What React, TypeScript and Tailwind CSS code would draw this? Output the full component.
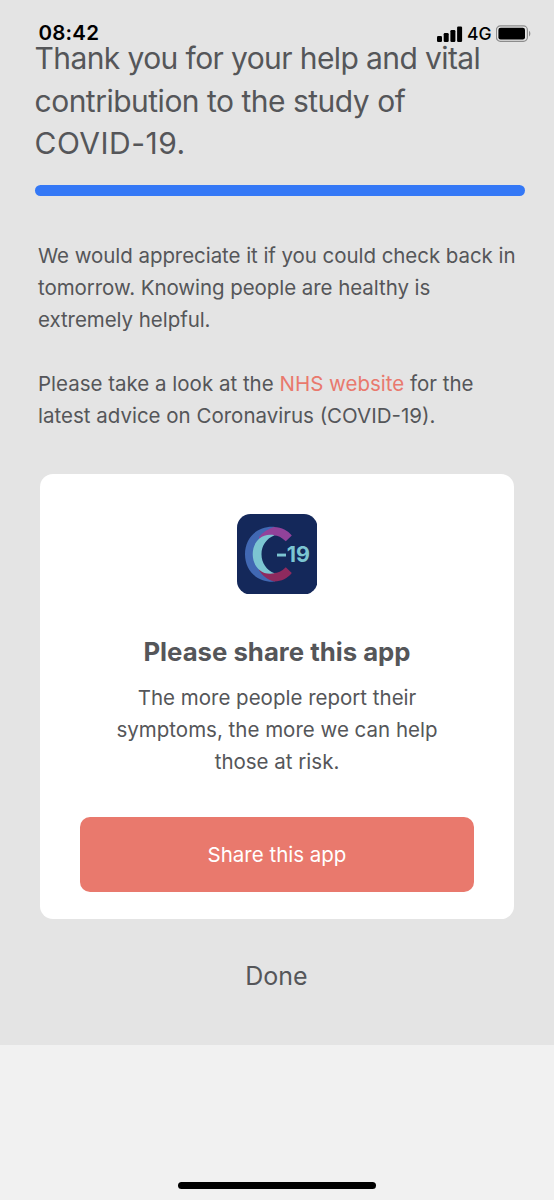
import type { ReactNode } from "react";

const HEADING = [
  { text: "Thank you for your help and vital", spacing: "tracking-[-0.6px]" },
  { text: "contribution to the study of", spacing: "tracking-[-0.5px]" },
  { text: "COVID-19.", spacing: "tracking-[0.5px]" },
];

function StatusBar() {
  return (
    <div className="absolute inset-x-0 top-0 flex h-[67px] items-center justify-between pr-[22px] pl-[38.5px] text-black">
      <span className="text-[20.5px] leading-none font-semibold tracking-[0.2px]">08:42</span>
      <div className="flex items-center">
        <svg className="h-4 w-[26px]" viewBox="0 0 26 16">
          <rect x="0" y="10" width="5" height="6" rx="1.2" />
          <rect x="6.7" y="7" width="5" height="9" rx="1.2" />
          <rect x="13.4" y="4" width="5" height="12" rx="1.2" />
          <rect x="20.1" y="0.5" width="5" height="15.5" rx="1.2" />
        </svg>
        <span className="ml-1 w-[29px] text-[17.5px] leading-none font-medium whitespace-nowrap">4G</span>
        <svg className="h-[17px] w-9" viewBox="0 0 36 17">
          <rect x="0.4" y="0.9" width="31" height="15.4" rx="4" fill="none" stroke="#8c8c8c" strokeWidth="1.2" />
          <rect x="2.4" y="2.8" width="26.6" height="11.6" rx="2.2" />
          <path d="M33 5.8c1.8 .9 1.8 4.7 0 5.6z" fill="#8c8c8c" />
        </svg>
      </div>
    </div>
  );
}

function AppIcon() {
  return (
    <svg className="h-[80.5px] w-[80.5px] shrink-0" viewBox="0 0 80.5 80.5">
      <rect width="80.5" height="80.5" rx="13.5" fill="#14285a" />
      {/* outer blue crescent */}
      <path d="M38 12.9C20 11.5 8 24 8 40.2S20 69 38 67.6L34 60C20 56 20 24 34 21z" fill="#4168b3" />
      {/* upper and lower arms */}
      <path d="M22 23C25.5 18 31 15 37 12.9C45 13 50.7 16.4 54.8 21.5L48.8 27.2C43 21.5 38 20.5 33 22L22 28z" fill="#92429a" />
      <path d="M22 52L33 58.5C38 60 43 59 48.8 53.2L54.8 59C50.5 64.5 44.5 67.3 37.5 67.5C30 65.5 25 61.5 22 56z" fill="#8e2a5e" />
      {/* inner crescent */}
      <path d="M37.5 21.2C23 18.5 15.7 29.5 15.7 40.2S23 62 37.5 59.3C29.5 56 24.5 49 24.5 40.2S29.5 24.5 37.5 21.2z" fill="#7cc5d2" />
      <rect x="40" y="39.6" width="9" height="2.9" fill="#7cc5d2" />
      <text y="48" fill="#7cc5d2" fontSize="21.5" fontWeight="700">
        <tspan x="49.8">1</tspan>
        <tspan x="59">9</tspan>
      </text>
    </svg>
  );
}

function Copy({ children }: { children: ReactNode }) {
  return <p className="text-[20.5px] leading-[32.1px] whitespace-nowrap">{children}</p>;
}

export default function App() {
  return (
    <div className="relative h-[1200px] w-[554px] overflow-hidden bg-[#f1f1f1] font-['Inter',sans-serif] text-[#555659]">
      <StatusBar />
      <main className="flex h-[1045px] flex-col bg-[#e4e4e4] pt-[37px]">
        <h1 className="pl-[34.5px] text-[30px] leading-[42.7px] font-normal whitespace-nowrap">
          {HEADING.map((line) => (
            <span key={line.text} className={`block ${line.spacing}`}>
              {line.text}
            </span>
          ))}
        </h1>
        <div className="mt-[19.5px] ml-[35px] h-[11px] w-[490px] shrink-0 rounded-full bg-[#3478f6]" />

        <div className="mt-[44px] flex flex-col gap-[32px] pl-[38px]">
          <div className="tracking-[-0.06px]">
            <Copy>
              We would appreciate it if you could check back in
              <br />
              tomorrow. Knowing people are healthy is
              <br />
              extremely helpful.
            </Copy>
          </div>
          <Copy>
            Please take a look at the <a className="text-[#e9796d]">NHS website</a> for the
            <br />
            latest advice on Coronavirus (COVID-19).
          </Copy>
        </div>

        <section className="mx-[40px] mt-[41.5px] flex h-[445px] shrink-0 flex-col items-center rounded-[13px] bg-white px-[40px] pt-[40px]">
          <AppIcon />
          <h2 className="mt-[41.5px] text-[25.75px] leading-[32px] font-bold whitespace-nowrap">Please share this app</h2>
          <div className="mt-[14px] text-center">
            <Copy>
              The more people report their
              <br />
              symptoms, the more we can help
              <br />
              those at risk.
            </Copy>
          </div>
          <button className="mt-[39px] h-[75px] w-full shrink-0 rounded-[10px] bg-[#e9796d] pt-[2px] text-[20.5px] text-white">
            Share this app
          </button>
        </section>

        <button className="mt-[41px] self-center pr-[1px] text-[25px] leading-[32px]">Done</button>
      </main>
      <div className="absolute bottom-[11px] left-[178px] h-[7px] w-[198px] rounded-full bg-black" />
    </div>
  );
}
